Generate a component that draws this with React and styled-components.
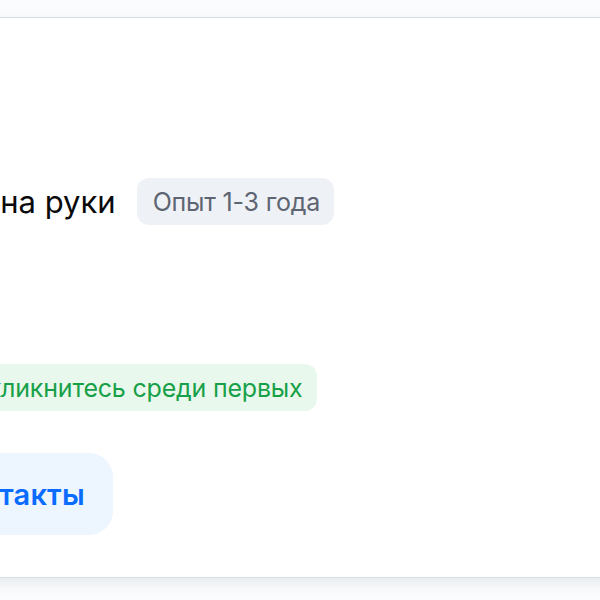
import React from 'react';
import styled, { createGlobalStyle } from 'styled-components';

const GlobalStyle = createGlobalStyle`
    html, body {
        margin: 0;
        padding: 0;
        background: #fbfcfd;
        font-family: Inter, "Noto Sans", "Liberation Sans", sans-serif;
        overflow: hidden;
    }
`;

export default function App() {
    return (
        <Page>
            <GlobalStyle />
            <Card>
                <SalaryRow>
                    <Salary>Доход на руки</Salary>
                    <Tag>Опыт 1-3 года</Tag>
                </SalaryRow>
                <Badges>
                    <Tag $tone="green">
                        <Dot />
                        Откликнитесь среди первых
                    </Tag>
                </Badges>
                <Actions>
                    <Button>Контакты</Button>
                </Actions>
            </Card>
        </Page>
    );
}

const Page = styled.div`
    width: 600px;
    height: 600px;
    padding-top: 17px;
    box-sizing: border-box;
    overflow: hidden;
`;

const Card = styled.div`
    margin-left: -122px;
    width: 760px;
    height: 561px;
    box-sizing: border-box;
    padding: 160px 36px 0;
    background: #fff;
    border: 1px solid #d6dee6;
    border-radius: 24px;
    box-shadow: 0 5px 14px rgba(120, 135, 155, 0.16);
    display: flex;
    flex-direction: column;
`;

const SalaryRow = styled.div`
    display: flex;
    align-items: center;
    gap: 21px;
    margin-left: -21px;
`;

const Salary = styled.div`
    font-size: 31px;
    line-height: 40px;
    color: #0a0a0a;
`;

const Badges = styled.div`
    display: flex;
    gap: 12px;
    margin-top: 139px;
`;

const Tag = styled.span`
    display: inline-flex;
    align-items: center;
    gap: 6px;
    height: 47px;
    padding: 0 14px 0 16px;
    border-radius: 12px;
    font-size: 25px;
    letter-spacing: -0.2px;
    background: ${(p) => (p.$tone === 'green' ? '#e9f8ec' : '#eef1f5')};
    color: ${(p) => (p.$tone === 'green' ? '#17a048' : '#5d6573')};
`;

const Dot = styled.span`
    width: 20px;
    height: 20px;
    border-radius: 50%;
    background: currentColor;
`;

const Actions = styled.div`
    display: flex;
    gap: 12px;
    margin-top: 42px;
`;

const Button = styled.button`
    height: 82px;
    padding: 0 28px 0 29px;
    border: none;
    border-radius: 24px;
    background: #edf5ff;
    color: #0a6cff;
    font-family: inherit;
    font-size: 29px;
    font-weight: 600;
    letter-spacing: 0.2px;
`;
